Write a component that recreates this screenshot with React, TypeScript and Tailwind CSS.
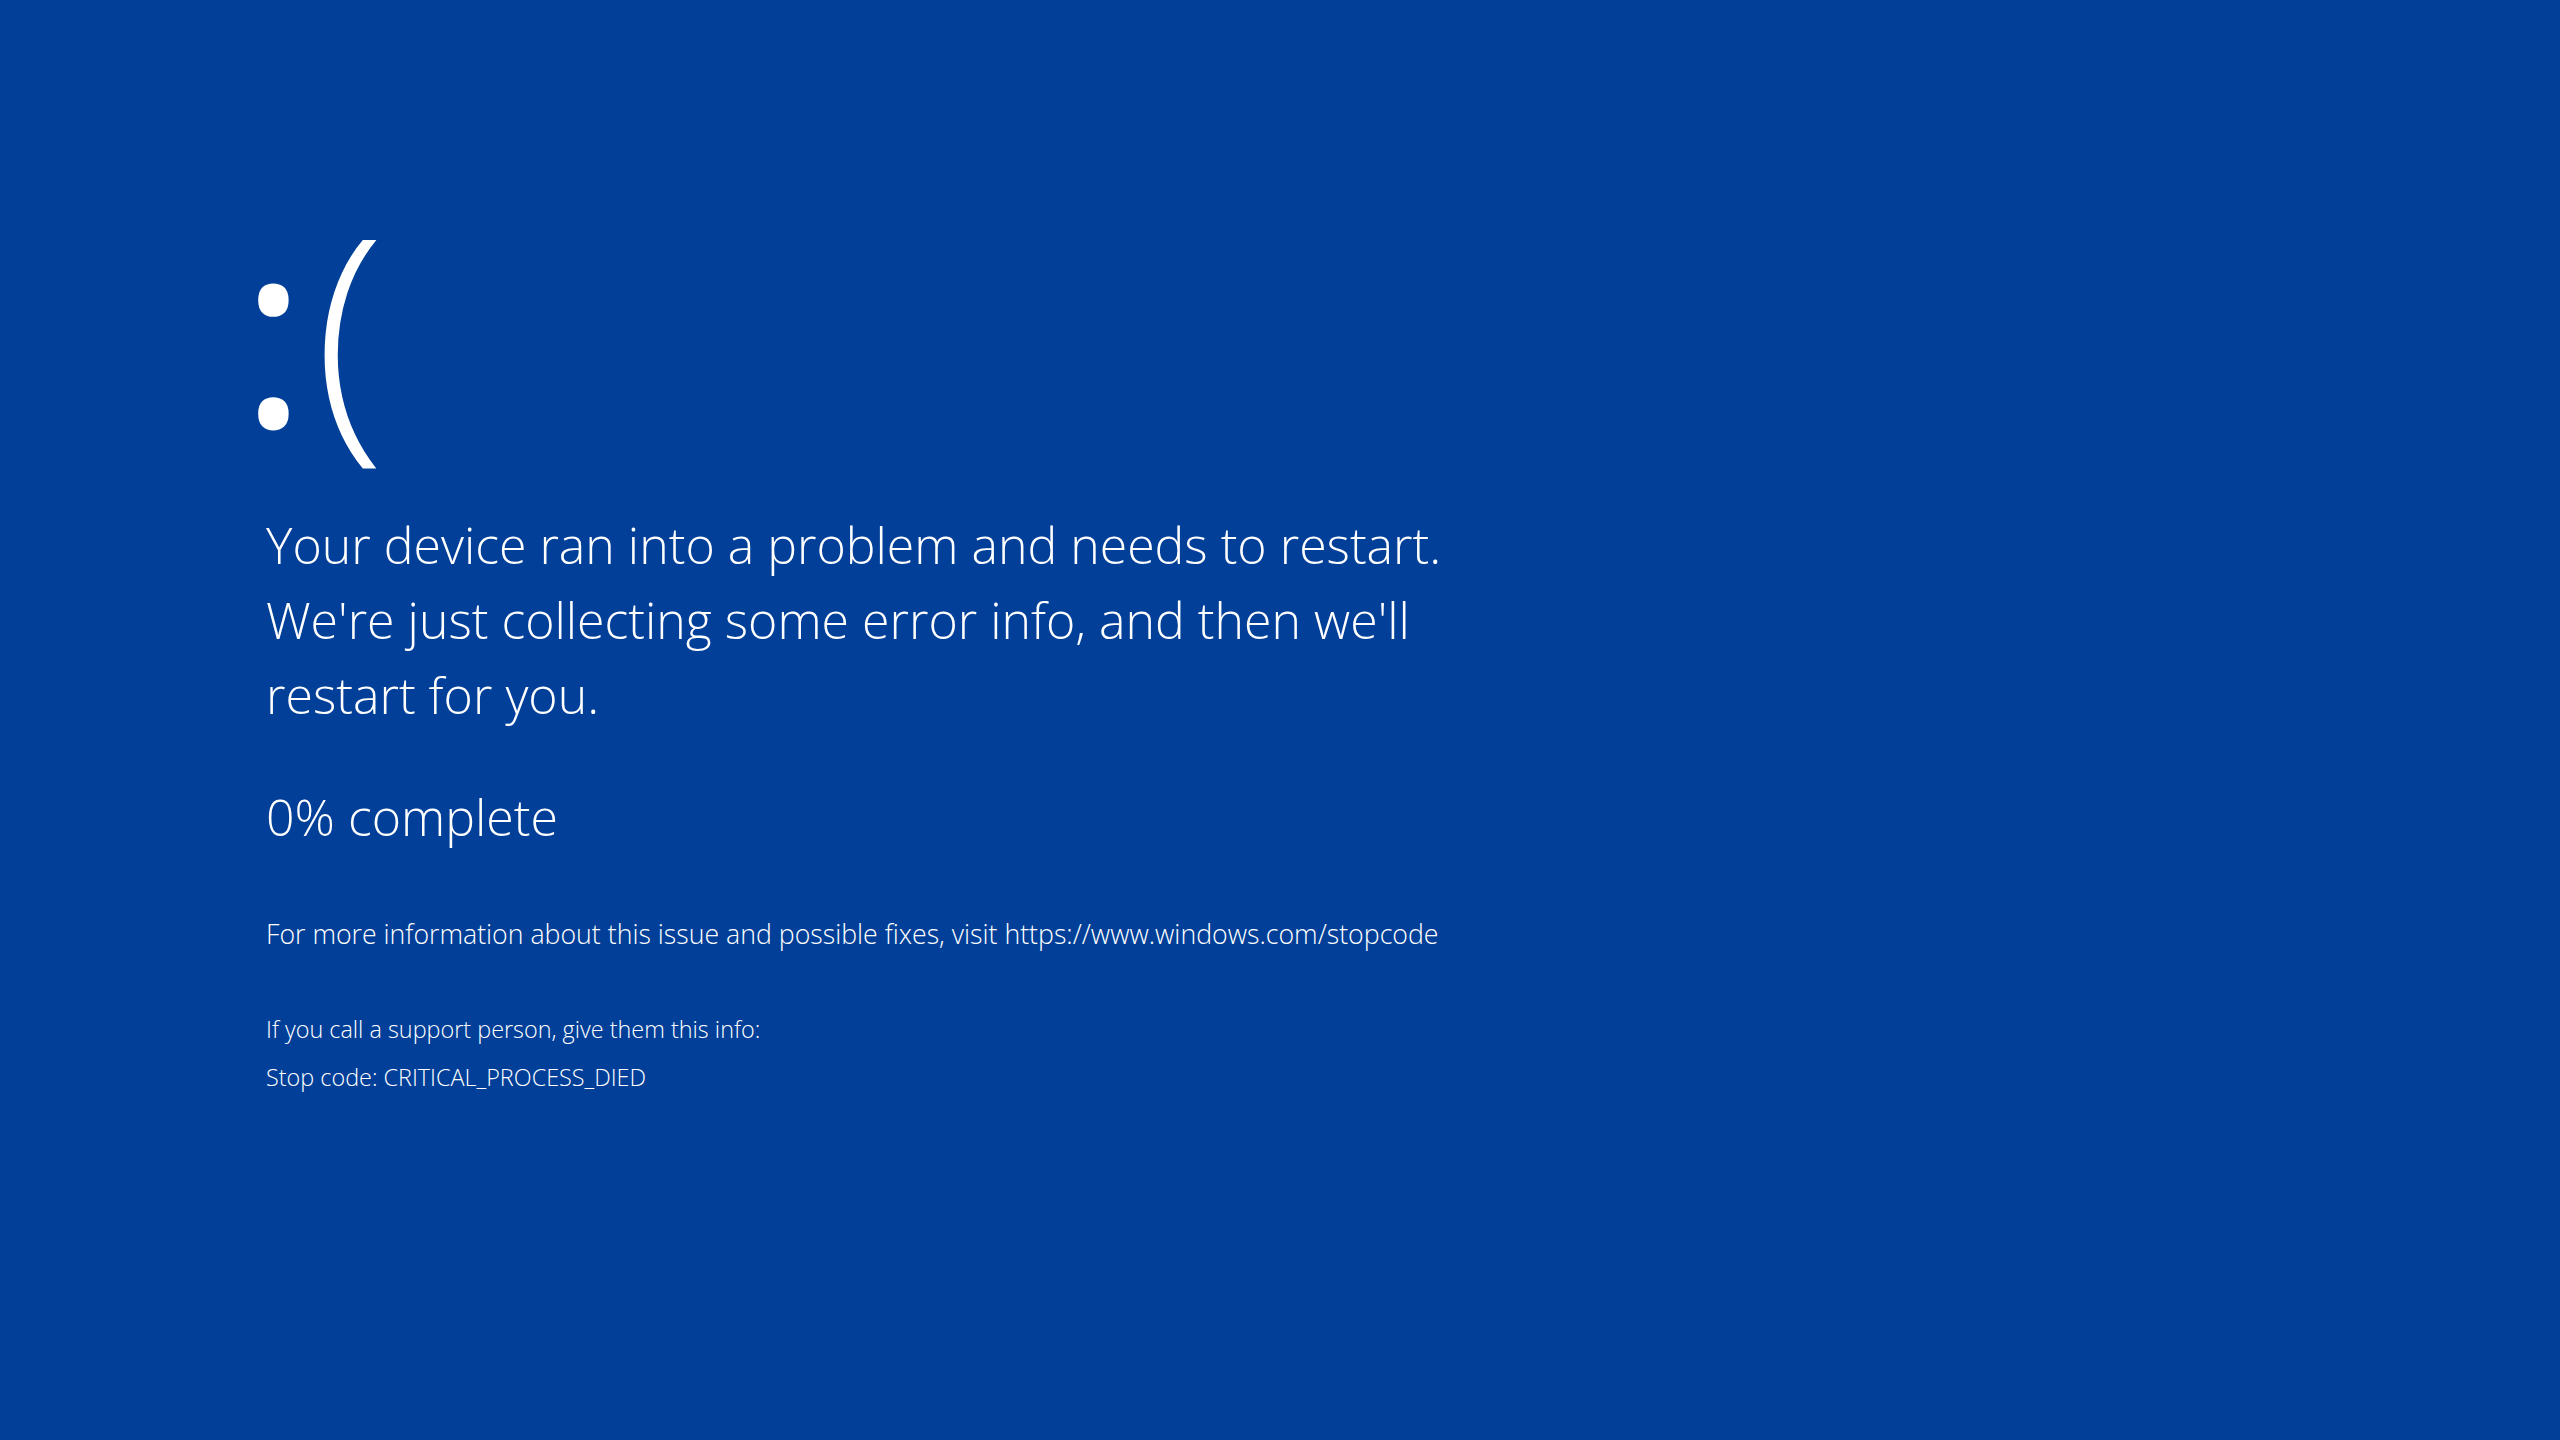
import React from 'react';

export default function App() {
  return (
    <div className="min-h-screen w-full bg-[#013f98] text-white pl-[266px] pt-[186px] font-['Open_Sans',sans-serif]">
      <div className="flex items-center leading-none h-[280px]">
        <span className="text-[262px] font-normal -ml-[27px]">:</span>
        <span className="text-[262px] font-[350] ml-[6px]">(</span>
      </div>

      <div className="mt-[42px] text-[50px] font-light leading-[75px] w-[1300px]">
        <p>Your device ran into a problem and needs to restart.</p>
        <p>We're just collecting some error info, and then we'll</p>
        <p>restart for you.</p>
      </div>

      <p className="mt-[47px] text-[50px] font-light leading-[75px]">0% complete</p>

      <p className="mt-[59px] text-[26.7px] font-light leading-[40px]">
        For more information about this issue and possible fixes, visit https://www.windows.com/stopcode
      </p>

      <div className="mt-[51px] text-[23.4px] font-light leading-[48px]">
        <p>If you call a support person, give them this info:</p>
        <p>Stop code: CRITICAL_PROCESS_DIED</p>
      </div>
    </div>
  );
}
